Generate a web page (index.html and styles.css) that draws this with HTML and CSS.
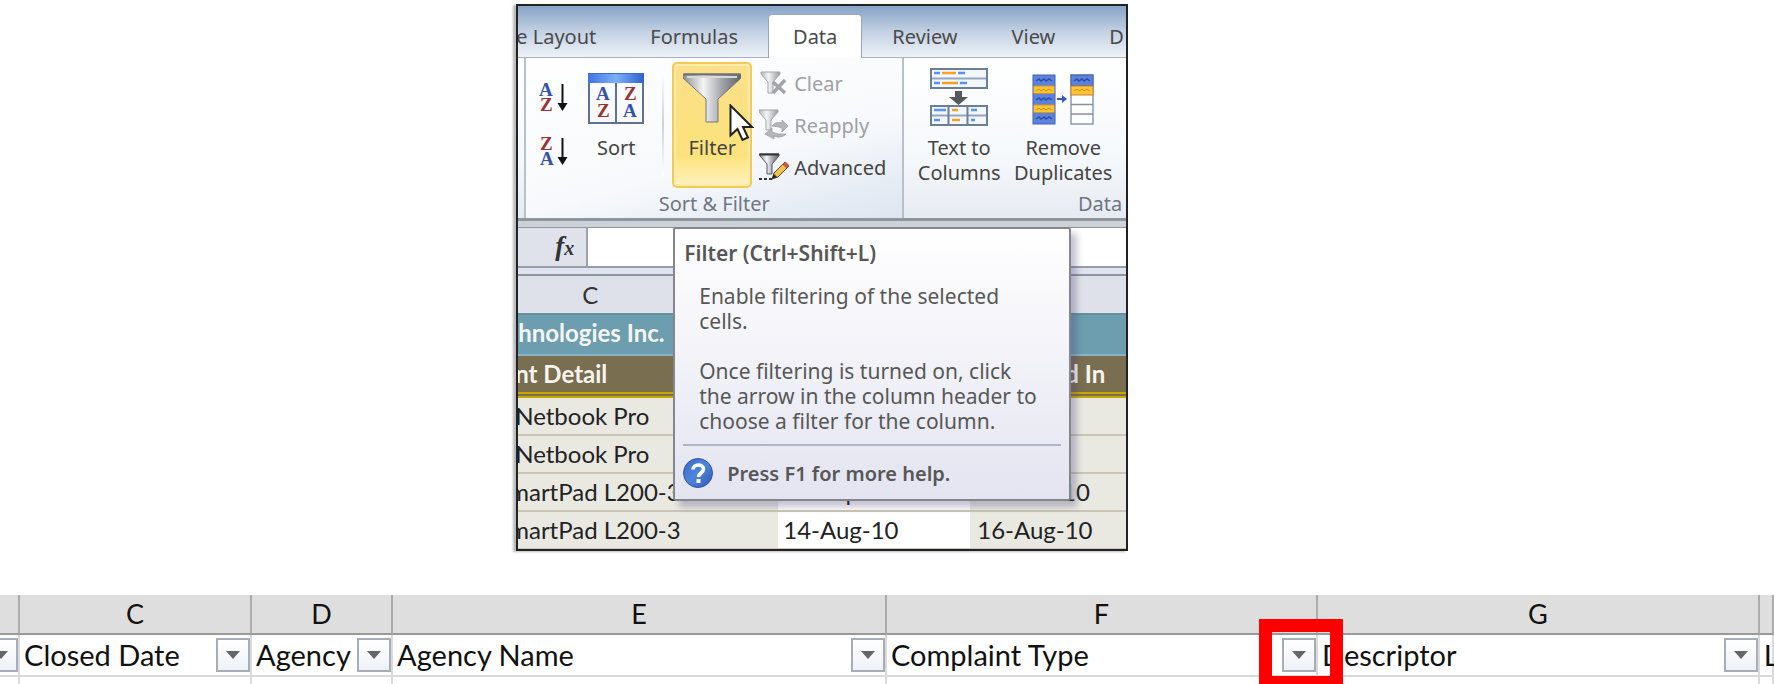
FILE: index.html
```html
<!DOCTYPE html>
<html lang="en">
<head>
<meta charset="utf-8">
<title>Filtering data</title>
<link rel="stylesheet" href="styles.css">
</head>
<body>
<svg class="defs" aria-hidden="true">
  <defs>
    <linearGradient id="steel" x1="0" x2="1"><stop offset="0" stop-color="#8b8e94"/><stop offset=".35" stop-color="#f4f5f6"/><stop offset=".65" stop-color="#a7a9ae"/><stop offset="1" stop-color="#5c5f66"/></linearGradient>
    <linearGradient id="pale" x1="0" x2="1"><stop offset="0" stop-color="#b2b4b8"/><stop offset=".4" stop-color="#f4f5f6"/><stop offset="1" stop-color="#96999e"/></linearGradient>
    <linearGradient id="bar" x1="0" x2="1"><stop offset="0" stop-color="#3f74e0"/><stop offset=".5" stop-color="#7db0fa"/><stop offset="1" stop-color="#2f5fcc"/></linearGradient>
    <linearGradient id="orb" x1="0" y1="0" x2="1" y2="1"><stop offset="0" stop-color="#3a66c4"/><stop offset=".5" stop-color="#4f86dc"/><stop offset="1" stop-color="#2d55b0"/></linearGradient>
  </defs>
</svg>
<main class="page">
  <section class="excel">
    <nav class="tabs">
      <button class="tab tab-first">e Layout</button>
      <button class="tab">Formulas</button>
      <button class="tab tab-active">Data</button>
      <button class="tab">Review</button>
      <button class="tab">View</button>
      <button class="tab">D</button>
    </nav>
    <div class="ribbon">
      <div class="group group-edge"></div>
      <div class="group group-sort">
        <div class="tools">
          <div class="az-col">
            <button class="icon-btn" aria-label="Sort A to Z">
              <svg width="30" height="30" viewBox="0 0 30 30"><g class="az"><text x="0" y="13" class="blue">A</text><text x="1" y="28" class="red">Z</text></g><path d="M23.500 1v22" stroke="#111" stroke-width="2"/><path d="M18.500 20h10l-5 8z" fill="#111"/></svg>
            </button>
            <button class="icon-btn" aria-label="Sort Z to A">
              <svg width="30" height="30" viewBox="0 0 30 30"><g class="az"><text x="1" y="13" class="red">Z</text><text x="1" y="28" class="blue">A</text></g><path d="M23.500 1v22" stroke="#111" stroke-width="2"/><path d="M18.500 20h10l-5 8z" fill="#111"/></svg>
            </button>
          </div>
          <button class="big-btn btn-sort">
            <svg width="56" height="52" viewBox="0 0 56 52"><rect x="1" y="1" width="54" height="49" fill="#f8faff" stroke="#5d7390" stroke-width="2"/><rect x="0" y="0" width="56" height="10" fill="url(#bar)"/><path d="M0 .5h56" stroke="#3c6cc4"/><path d="M28 10v40" stroke="#5d7390" stroke-width="2"/><g class="az"><text x="8" y="27" class="blue">A</text><text x="9" y="44" class="red">Z</text><text x="36" y="27" class="red">Z</text><text x="35" y="44" class="blue">A</text></g></svg>
            <span>Sort</span>
          </button>
          <div class="divider"></div>
          <button class="big-btn btn-filter">
            <svg width="58" height="52" viewBox="0 0 58 52"><path d="M0 1h58v4L35 26v23H23V26L0 5z" fill="url(#steel)" stroke="#74767b"/><path d="M1 1.500h56" stroke="#6f7177" stroke-width="2"/><path d="M4 4h50" stroke="#d7d8dc" stroke-width="2"/></svg>
            <span>Filter</span>
            <svg class="cursor" width="25" height="38" viewBox="0 0 25 38"><path d="M1.500 1.500v30l7-6.500 5 11 5.500-2.500-5-10.500h9z" fill="#fff" stroke="#222" stroke-width="2"/></svg>
          </button>
          <div class="side-col">
            <button class="side-btn" disabled>
              <svg width="30" height="26" viewBox="0 0 30 26"><path d="M2 2h19v2l-7 8v11h-5V12L2 4z" fill="url(#pale)" stroke="#a3a5a9"/><path d="M14 12l12 11M26 10L14 23" stroke="#a2a4a8" stroke-width="3.500"/></svg>
              <span>Clear</span>
            </button>
            <button class="side-btn" disabled>
              <svg width="30" height="32" viewBox="0 0 30 32"><path d="M0 1h19v2l-7 8v10H7V11L0 3z" fill="url(#pale)" stroke="#a3a5a9"/><path d="M13 17q4-5 10-3v-3l6 6-6 6v-4q-5-2-10-2zM27 25q-5 5-12 2v3l-9-5 7-6v4q6 3 14 2z" fill="#b4b6ba" stroke="#95979b" stroke-width=".7"/></svg>
              <span>Reapply</span>
            </button>
            <button class="side-btn side-on">
              <svg width="30" height="28" viewBox="0 0 30 28"><path d="M1 1h19v2l-7 8v10H8V11L1 3z" fill="url(#steel)" stroke="#55575b"/><path d="M0 1.500h20" stroke="#333" stroke-width="2"/><path d="M0 26h3m2 0h3m2 0h3" stroke="#333" stroke-width="2"/><path d="M13 26l2-6L26 9l4 4-11 11z" fill="#f3c04c" stroke="#5a4a2a"/><path d="M13 26l2-5 3 3z" fill="#222"/><path d="M23.500 11.500L26.500 8.500l4 4-3 3z" fill="#c85a48"/></svg>
              <span>Advanced</span>
            </button>
          </div>
        </div>
        <div class="group-label">Sort &amp; Filter</div>
      </div>
      <div class="group group-data">
        <div class="tools">
          <button class="big-btn btn-text">
            <svg width="58" height="58" viewBox="0 0 58 58"><g fill="#f2f6fd" stroke="#6b7f99" stroke-width="2"><path d="M1 1h56v19H1zM1 38h56v19H1z"/></g><path d="M2 10.500h54M2 47.500h54" stroke="#93a6c0" stroke-width="2"/><path d="M18.500 38v19M37.500 38v19" stroke="#6b7f99" stroke-width="2"/><path d="M4 5h6M28 5h7M4 15h6M30 15h7M4 42h12M4 52h6M41 42h6M41 52h4" stroke="#5a92f5" stroke-width="2.500"/><path d="M12 5h14M12 15h16M22 42h6M22 52h8" stroke="#f5a01e" stroke-width="2.500"/><path d="M25 23h7v6h6l-9.500 8L19 29h6z" fill="#55585c"/></svg>
            <span>Text to<br>Columns</span>
          </button>
          <button class="big-btn btn-dup">
            <svg width="62" height="52" viewBox="0 0 62 52"><rect x="1" y="1" width="22" height="49" fill="#5b82dc"/><path d="M1 12h22v7H1zM1 31h22v7H1z" fill="#fcc534"/><path d="M1 12h22M1 19.500h22M1 31h22M1 38.500h22" stroke="#d79426"/><rect x="1" y="1" width="22" height="49" fill="none" stroke="#4062b4"/><path d="M4 7l3-2 2 2 3-2 2 2 3-2 3 2M4 26l3-2 2 2 3-2 2 2 3-2 3 2M4 45l3-2 2 2 3-2 2 2 3-2 3 2" fill="none" stroke="#2b4da6" stroke-width="1.500"/><path d="M4 17l3-2 2 2 3-2 2 2 3-2 3 2M4 36l3-2 2 2 3-2 2 2 3-2 3 2" fill="none" stroke="#d98f14"/><rect x="39" y="1" width="22" height="49" fill="#fff" stroke="#8a9ab4" stroke-width="1.500"/><rect x="39" y="1" width="22" height="11" fill="#5b82dc" stroke="#4062b4"/><rect x="39" y="12" width="22" height="9" fill="#fcc534" stroke="#cc7a3a"/><path d="M42 7l3-2 2 2 3-2 2 2 3-2 3 2" fill="none" stroke="#2b4da6" stroke-width="1.500"/><path d="M42 17l3-2 2 2 3-2 2 2 3-2 3 2" fill="none" stroke="#d98f14"/><path d="M39 30.500h22M39 40h22" stroke="#8a8f98" stroke-width="1.500"/><path d="M25 25h6" stroke="#3259b8" stroke-width="2"/><path d="M30 21l5 4-5 4z" fill="#3259b8"/></svg>
            <span>Remove<br>Duplicates</span>
          </button>
        </div>
        <div class="group-label label-right">Data</div>
      </div>
    </div>
    <div class="sheet">
      <div class="formula-row"><span class="fx"><i>f</i><i class="fx-x">x</i></span><input class="formula" aria-label="Formula"></div>
      <table class="cells">
        <colgroup><col class="c1"><col class="c2"><col class="c3"></colgroup>
        <thead><tr><th>C</th><th></th><th></th></tr></thead>
        <tbody>
          <tr class="title-row"><td colspan="3">hnologies Inc.</td></tr>
          <tr class="head-row"><td class="cut">nt Detail</td><td></td><td class="end">d In</td></tr>
          <tr><td class="cut">Netbook Pro</td><td></td><td></td></tr>
          <tr><td class="cut">Netbook Pro</td><td></td><td></td></tr>
          <tr><td class="cut-more">martPad L200-3</td><td class="picked">14-Sep-10</td><td class="date">16-Oct-10</td></tr>
          <tr><td class="cut-more">martPad L200-3</td><td class="picked">14-Aug-10</td><td class="date">16-Aug-10</td></tr>
        </tbody>
      </table>
      <aside class="tip" role="tooltip">
        <h2>Filter (Ctrl+Shift+L)</h2>
        <div class="tip-body">
          <p>Enable filtering of the selected<br>cells.</p>
          <p>Once filtering is turned on, click<br>the arrow in the column header to<br>choose a filter for the column.</p>
        </div>
        <div class="tip-help">
          <svg width="30" height="30" viewBox="0 0 30 30"><circle cx="15" cy="15" r="14.500" fill="url(#orb)" stroke="#2f55a5"/><path d="M10 11.500c0-6 10.500-6 10.500-.5 0 4-5 3.500-5 8" fill="none" stroke="#fff" stroke-width="3.500"/><rect x="13.500" y="21" width="4" height="4" fill="#fff"/></svg>
          <strong>Press F1 for more help.</strong>
        </div>
      </aside>
    </div>
  </section>

  <table class="grid">
    <colgroup><col class="g0"><col class="gc"><col class="gd"><col class="ge"><col class="gf"><col class="gg"><col></colgroup>
    <thead><tr><th></th><th>C</th><th>D</th><th>E</th><th>F</th><th>G</th><th></th></tr></thead>
    <tbody>
      <tr>
        <td><div class="cell"><span></span><button class="drop" aria-label="Filter column B"></button></div></td>
        <td><div class="cell"><span>Closed Date</span><button class="drop" aria-label="Filter Closed Date"></button></div></td>
        <td><div class="cell"><span>Agency</span><button class="drop" aria-label="Filter Agency"></button></div></td>
        <td><div class="cell"><span>Agency Name</span><button class="drop" aria-label="Filter Agency Name"></button></div></td>
        <td><div class="cell"><span>Complaint Type</span><button class="drop" aria-label="Filter Complaint Type"></button><div class="mark"></div></div></td>
        <td><div class="cell"><span>Descriptor</span><button class="drop" aria-label="Filter Descriptor"></button></div></td>
        <td><div class="cell"><span>L</span></div></td>
      </tr>
      <tr class="blank"><td></td><td></td><td></td><td></td><td></td><td></td><td></td></tr>
    </tbody>
  </table>
</main>
</body>
</html>
```
FILE: styles.css
```css
* { box-sizing: border-box; }
body { margin: 0; background: #fff; overflow: hidden; }
button { border: 0; background: none; padding: 0; margin: 0; font: inherit; color: inherit; }
svg { display: block; }
.defs { position: absolute; width: 0; height: 0; }
.page { display: flex; flex-direction: column; gap: 44px; padding-top: 4px; }

.excel {
  width: 612px;
  margin-left: 29.1%;
  border: 2px solid #222;
  overflow: hidden;
  font: 20px/25px "Noto Sans", "Open Sans", sans-serif;
  color: #444;
  background: #e9e9e2;
  box-shadow: -3px 1px 2px #bbb;
}
.tabs {
  display: flex;
  gap: 6px;
  height: 52px;
  padding-top: 8px;
  background: linear-gradient(#86a3c6, #c3d1e3 50%, #eef2f8);
  border-bottom: 1px solid #a8b0bb;
}
.tab { flex: none; height: 44px; padding: 0 24px; color: #4a4a4a; }
.tab-first { padding-left: 0; margin-left: -2px; }
.tab-active { background: #fff; border: 1px solid #9aa6b6; border-bottom: 0; border-radius: 4px 4px 0 0; }

.ribbon { display: flex; height: 163px; background: linear-gradient(#fff, #f6f9fc 60%, #e6ebf2); border-bottom: 3px solid #8f959d; }
.group { flex: none; display: flex; flex-direction: column; justify-content: space-between; border-right: 2px solid #b9c0ca; }
.group-edge { width: 8px; }
.group-sort { width: 378px; background: linear-gradient(165deg, #fff, #f7f9fc 60%, #dde5f0); }
.group-data { width: 222px; border: 0; }
.tools { display: flex; padding-top: 4px; }
.group-label { height: 27px; text-align: center; color: #6f7682; }
.label-right { text-align: right; padding-right: 4px; }
.az-col { display: flex; flex-direction: column; gap: 24px; padding: 21px 0 0 13px; width: 52px; }
.az-col svg { overflow: visible; }
.az { font: bold 19px "Liberation Serif", serif; }
.blue { fill: #3352a8; }
.red { fill: #993333; }
.big-btn { display: flex; flex-direction: column; align-items: center; position: relative; height: 126px; color: #444; }
.big-btn span { margin-top: auto; }
.btn-sort { width: 76px; padding: 11px 0 28px; }
.divider { width: 2px; height: 104px; margin: 10px 8px 0; background: linear-gradient(#fff, #ccd2da 50%, #fff); }
.btn-filter {
  width: 80px;
  padding: 9px 0 26px;
  border: 2px solid #f2ca56;
  border-radius: 5px;
  box-shadow: inset 0 0 0 2px #fdebac;
  background: linear-gradient(#fbe08a, #fde27c 75%, #fff3bf);
}
.cursor { position: absolute; left: 55px; top: 40px; }
.side-col { display: flex; flex-direction: column; padding-left: 7px; }
.side-btn { display: flex; align-items: center; gap: 5px; height: 42px; color: #a0a0a4; }
.side-on { color: #444; }
.btn-text { width: 102px; margin-left: 4px; padding: 6px 0 3px; }
.btn-dup { width: 106px; padding: 12px 0 3px; }

.sheet { position: relative; border-top: 6px solid #cdd1d8; }
.formula-row { display: flex; height: 41px; border-top: 1px solid #8f959d; border-bottom: 2px solid #999da3; background: #dfe2ea; }
.fx { width: 70px; padding: 4px 12px 0 0; text-align: right; font: bold 27px/28px "Liberation Serif", serif; color: #333; border-right: 2px solid #9fa3aa; }
.fx-x { font-size: 20px; }
.formula { flex: 1; border: 0; background: #fff; min-width: 0; }
.cells {
  width: 100%;
  table-layout: fixed;
  border-collapse: separate;
  border-spacing: 0;
  border-top: 6px solid #dde3f0;
  font: 24px/34px Lato, "Open Sans", sans-serif;
  color: #222;
}
.c1 { width: 260px; }
.c2 { width: 192px; }
.cells th { height: 39px; padding: 0 22px 0 0; text-align: center; font-weight: 400; background: #dfe1ea; border-top: 2px solid #8f959d; color: #333; }
.cells th:first-child { padding: 0 180px 0 0; text-align: right; }
.cells td { height: 38px; padding: 0; white-space: nowrap; border-bottom: 2px solid #cbc5b5; background: #e9e9e2; }
.cells .title-row td { height: 43px; padding-bottom: 4px; background: #6c9eb0; color: #f5f5f0; font-weight: 700; border-top: 2px solid #668f9f; border-bottom: 2px solid #8ab4c3; }
.cells .head-row td { height: 42px; background: #7a6e51; color: #f5f5f0; font-weight: 700; border-bottom: 6px double #c8a800; }
.cells tr:last-child td { height: 37px; border-bottom: 1px solid #cbc5b5; }
.cells .cut { text-indent: -3px; }
.cells .cut-more { text-indent: -9px; }
.cells .end { text-align: right; padding-right: 21px; }
.cells .picked { padding-left: 5px; background: #fff; }
.cells .date { padding-left: 7px; }

.tip {
  position: absolute;
  left: 155px;
  top: 0;
  width: 398px;
  padding: 12px 8px 11px;
  color: #575757;
  background: linear-gradient(#fff, #f3f3f9 45%, #e3e4f0);
  border: 2px solid #83868c;
  border-radius: 3px;
  box-shadow: 6px 6px 6px rgba(70, 60, 110, .3);
}
.tip h2 { margin: 0; padding-left: 1px; font-size: 21px; line-height: 25px; font-weight: 600; }
.tip-body { display: flex; flex-direction: column; gap: 25px; padding: 18px 0 10px 16px; font-size: 21px; border-bottom: 2px solid #aeb7c8; white-space: nowrap; }
.tip p { margin: 0; }
.tip-help { display: flex; align-items: center; gap: 14px; padding-top: 12px; white-space: nowrap; }
.tip-help strong { font-weight: 600; }

.grid { width: 100%; table-layout: fixed; border-collapse: separate; border-spacing: 0; font: 29px/36px Lato, "Open Sans", sans-serif; color: #111; }
.g0 { width: 1.13%; }
.gc { width: 13.08%; }
.gd { width: 7.95%; }
.ge { width: 27.84%; }
.gf { width: 24.3%; }
.gg { width: 24.9%; }
.grid th { height: 40px; padding: 0; font-size: 27px; font-weight: 400; background: #dedede; border-right: 2px solid #ababab; border-bottom: 2px solid #999; }
.grid td { height: 42px; padding: 0; border-right: 2px solid #dadada; border-bottom: 2px solid #dadada; }
.grid .blank td { height: 10px; border-bottom: 0; }
.cell { position: relative; display: flex; justify-content: space-between; align-items: center; height: 40px; padding-left: 4px; white-space: nowrap; }
.grid td:first-child .cell { justify-content: flex-end; padding: 0; }
.drop { flex: none; display: grid; place-items: center; width: 34px; height: 34px; border: 2px solid #a6adb8; background: linear-gradient(#fff, #eef1f6); }
.drop::before { content: ""; border: 7px solid transparent; border-top: 8px solid #666; border-bottom: 0; }
.mark { position: absolute; z-index: 2; right: -27px; top: -16px; width: 84px; height: 70px; border: 13px solid #f00; }
```
